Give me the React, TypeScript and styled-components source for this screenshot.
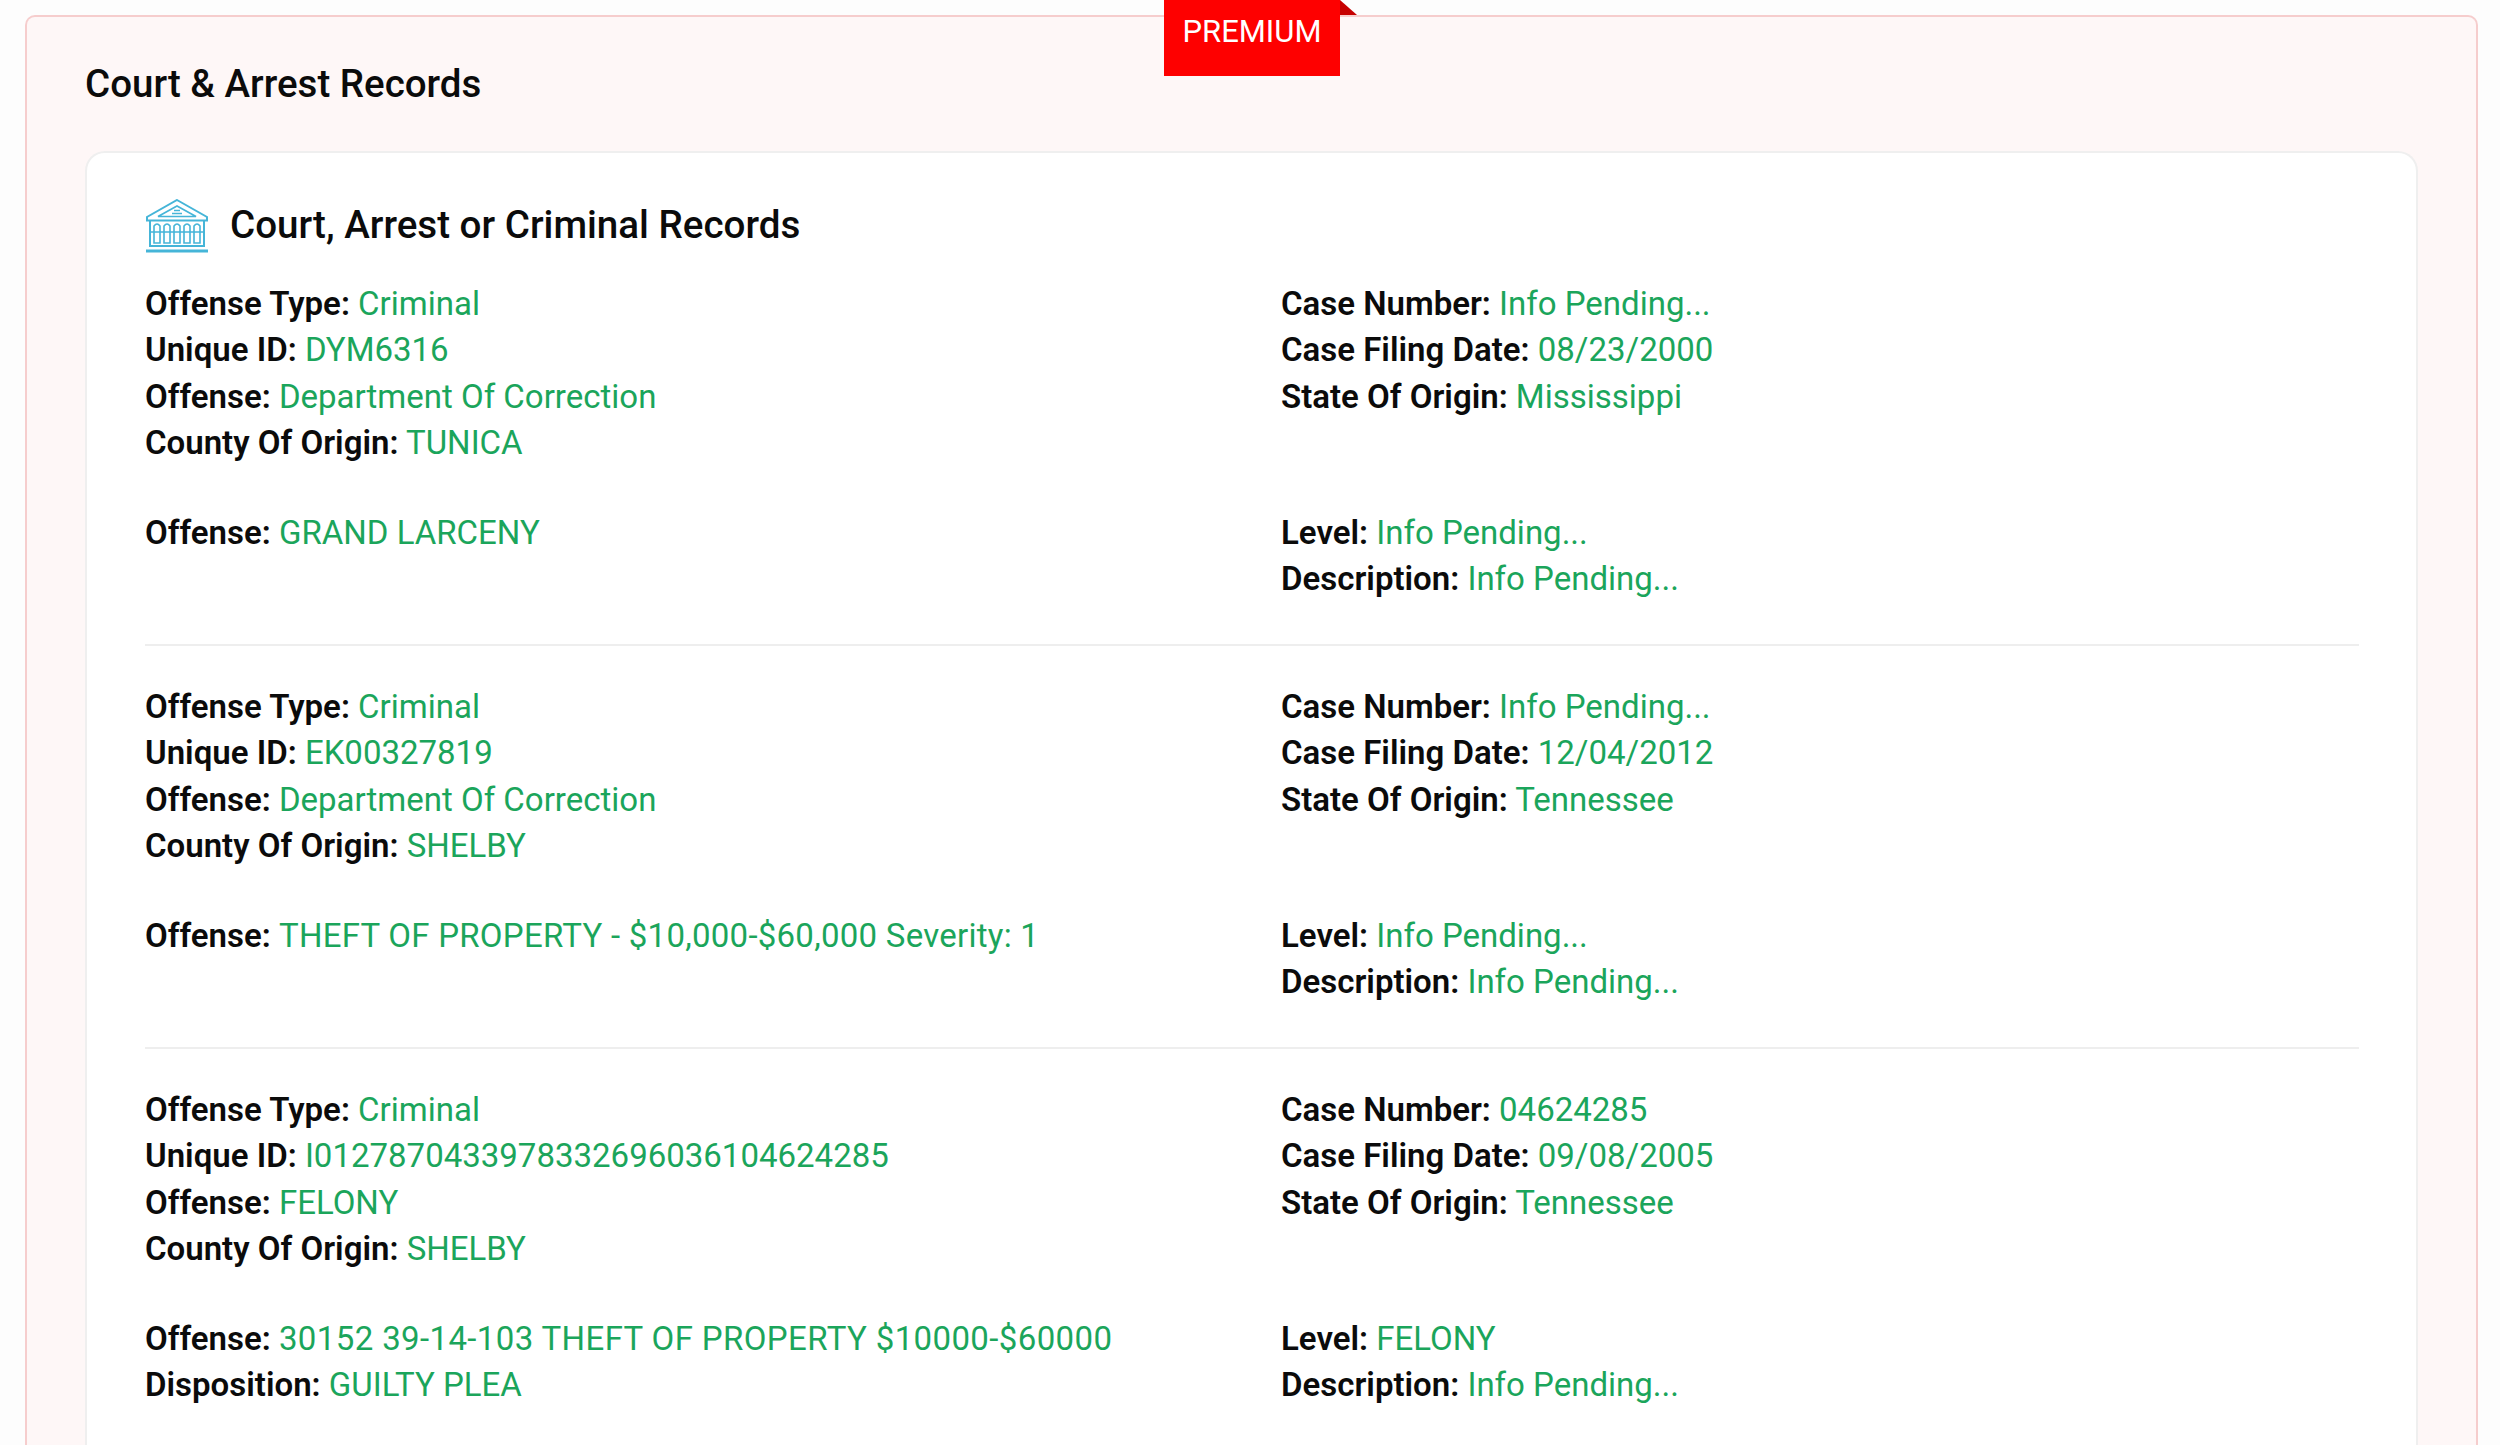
import React from "react";
import styled, { createGlobalStyle } from "styled-components";

const Global = createGlobalStyle`
  html, body { margin: 0; padding: 0; background: #fdfdfd; height: 1445px; overflow: hidden; }
  body { font-family: Roboto, "Liberation Sans", sans-serif; color: #0b0b0b; }
`;
const Page = styled.div`
  display: flex;
  padding: 15px 22px 0 25px;
  height: 1445px;
  box-sizing: border-box;
  overflow: hidden;
`;
const Outer = styled.section`
  position: relative;
  flex: 1;
  display: flex;
  flex-direction: column;
  background: #fef7f7;
  border: 2px solid #f6cdcd;
  border-bottom: 0;
  border-radius: 10px 10px 0 0;
  padding: 44px 58px 0;
`;
const Ribbon = styled.div`
  position: absolute;
  top: -17px;
  left: 1137px;
  width: 176px;
  height: 76px;
  background: #fe0000;
  color: #fff;
  font-size: 31px;
  line-height: 64px;
  text-align: center;
  &::after {
    content: "";
    position: absolute;
    left: 100%;
    top: 0;
    border-style: solid;
    border-width: 15px 0 0 17px;
    border-color: transparent transparent transparent #c60000;
  }
`;
const Title = styled.h2`
  margin: 0 0 44px;
  font-size: 38.5px;
  line-height: 46px;
  font-weight: 500;
`;
const Inner = styled.div`
  flex: 1;
  background: #fff;
  border: 2px solid #efefef;
  border-bottom: 0;
  border-radius: 20px 20px 0 0;
  padding: 44px 57px 0 58px;
`;
const Heading = styled.div`
  display: flex;
  align-items: center;
  gap: 21px;
  margin-bottom: 28px;
  height: 56px;
`;
const HeadingText = styled.h3`
  margin: 0;
  font-size: 38.6px;
  font-weight: 500;
  line-height: 46px;
`;
const IconSvg = styled.svg`
  flex: none;
  margin-top: 2px;
`;
const Record = styled.div<{ $last?: boolean }>`
  padding-bottom: ${(p) => (p.$last ? 0 : 42)}px;
  margin-bottom: ${(p) => (p.$last ? 0 : 37.5)}px;
  border-bottom: ${(p) => (p.$last ? "none" : "2px solid #eeeeee")};
`;
const Grid = styled.div`
  display: grid;
  grid-template-columns: 1136px 1fr;
  min-height: 185px;
`;
const SubGrid = styled(Grid)`
  min-height: 0;
  margin-top: 43px;
`;
const Col = styled.div`
  display: flex;
  flex-direction: column;
`;
const Line = styled.div`
  font-size: 33px;
  line-height: 46.4px;
  white-space: nowrap;
`;
const Label = styled.b`
  font-weight: 600;
`;
const Value = styled.span<{ $spacing?: number }>`
  color: #1ba55b;
  letter-spacing: ${(p) => p.$spacing ?? 0}px;
`;

type Pair = [string, string, number?];
type Rec = { a: Pair[]; b: Pair[]; c: Pair[]; d: Pair[] };

const records: Rec[] = [
  {
    a: [["Offense Type", "Criminal"], ["Unique ID", "DYM6316"], ["Offense", "Department Of Correction"], ["County Of Origin", "TUNICA"]],
    b: [["Case Number", "Info Pending..."], ["Case Filing Date", "08/23/2000"], ["State Of Origin", "Mississippi"]],
    c: [["Offense", "GRAND LARCENY"]],
    d: [["Level", "Info Pending..."], ["Description", "Info Pending..."]],
  },
  {
    a: [["Offense Type", "Criminal"], ["Unique ID", "EK00327819"], ["Offense", "Department Of Correction"], ["County Of Origin", "SHELBY"]],
    b: [["Case Number", "Info Pending..."], ["Case Filing Date", "12/04/2012"], ["State Of Origin", "Tennessee"]],
    c: [["Offense", "THEFT OF PROPERTY - $10,000-$60,000 Severity: 1", 0.26]],
    d: [["Level", "Info Pending..."], ["Description", "Info Pending..."]],
  },
  {
    a: [["Offense Type", "Criminal"], ["Unique ID", "I0127870433978332696036104624285"], ["Offense", "FELONY"], ["County Of Origin", "SHELBY"]],
    b: [["Case Number", "04624285"], ["Case Filing Date", "09/08/2005"], ["State Of Origin", "Tennessee"]],
    c: [["Offense", "30152 39-14-103 THEFT OF PROPERTY $10000-$60000", 0.38], ["Disposition", "GUILTY PLEA"]],
    d: [["Level", "FELONY"], ["Description", "Info Pending..."]],
  },
];

const Lines = ({ items }: { items: Pair[] }) => (
  <Col>
    {items.map(([k, v, spacing]) => (
      <Line key={k}>
        <Label>{k}:</Label> <Value $spacing={spacing}>{v}</Value>
      </Line>
    ))}
  </Col>
);

const CourtIcon = () => (
  <IconSvg width="64" height="54" viewBox="0 0 64 54" fill="none" stroke="#45b5d8" strokeWidth="2">
    <path d="M32 1 L62 18 V21.500 H2 V18 Z" />
    <path d="M13 17.500 L32 7 L51 17.500 Z" strokeWidth="1.6" />
    <path d="M29 11.500 H35 M27 14.500 H37" strokeWidth="1.6" />
    <path d="M5 21 V47 H59 V21" />
    <path
      d="M9 27 Q12 23 15 27 V44 H9 Z M19 27 Q22 23 25 27 V44 H19 Z M29 27 Q32 23 35 27 V44 H29 Z M39 27 Q42 23 45 27 V44 H39 Z M49 27 Q52 23 55 27 V44 H49 Z"
      strokeWidth="1.6"
    />
    <path d="M5 33 H59" strokeWidth="1.4" />
    <path d="M1 52 H63" strokeWidth="3" />
  </IconSvg>
);

export default function App() {
  return (
    <Page>
      <Global />
      <Outer>
        <Ribbon>PREMIUM</Ribbon>
        <Title>Court &amp; Arrest Records</Title>
        <Inner>
          <Heading>
            <CourtIcon />
            <HeadingText>Court, Arrest or Criminal Records</HeadingText>
          </Heading>
          {records.map((r, i) => (
            <Record key={i} $last={i === records.length - 1}>
              <Grid>
                <Lines items={r.a} />
                <Lines items={r.b} />
              </Grid>
              <SubGrid>
                <Lines items={r.c} />
                <Lines items={r.d} />
              </SubGrid>
            </Record>
          ))}
        </Inner>
      </Outer>
    </Page>
  );
}
